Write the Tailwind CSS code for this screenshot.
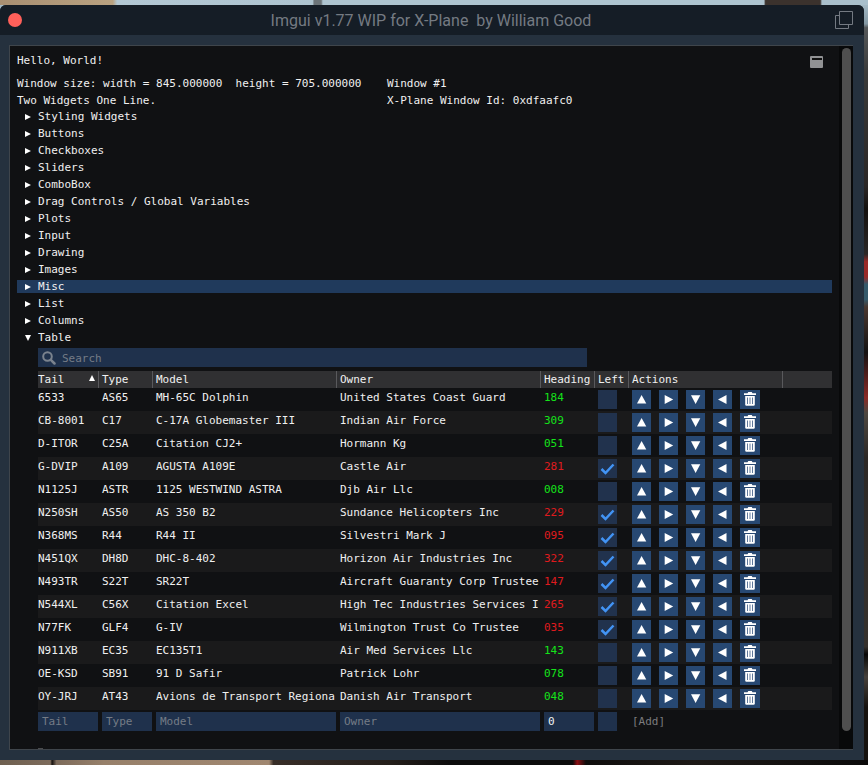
<!DOCTYPE html>
<html lang="en">
<head>
<meta charset="utf-8">
<meta name="viewport" content="width=device-width, initial-scale=1">
<title>Imgui v1.77 WIP for X-Plane</title>
<script src="https://cdn.jsdelivr.net/npm/@tailwindcss/browser@4"></script>
</head>
<body class="min-h-screen flex flex-col bg-[#1d1c1c] font-['DejaVu_Sans_Mono','Liberation_Mono',monospace] text-[11px] text-[#f0f0f0]">
<svg class="absolute w-0 h-0" aria-hidden="true">
  <symbol id="up" viewBox="0 0 19 19"><path d="M9.600 5L14.300 13.600H5z" fill="#fff"/></symbol>
  <symbol id="right" viewBox="0 0 19 19"><path d="M14.200 9.500L5.700 14V5z" fill="#fff"/></symbol>
  <symbol id="down" viewBox="0 0 19 19"><path d="M9.600 14L14.300 5.200H5z" fill="#fff"/></symbol>
  <symbol id="left" viewBox="0 0 19 19"><path d="M5 9.500L13.500 5v9z" fill="#fff"/></symbol>
  <symbol id="trash" viewBox="0 0 20 19"><path d="M4 3.200h3.500l.8-1.200h3.400l.8 1.200H16v1.700H4z" fill="#fff"/><path d="M5.200 6h9.600v8.600q0 1.200-1.200 1.200H6.400q-1.200 0-1.200-1.200z" fill="#fff"/><path d="M7.500 7.500v6.500M10 7.500v6.500M12.500 7.500v6.500" stroke="#5f789b" stroke-width="1"/></symbol>
  <symbol id="tri" viewBox="0 0 6 6"><path d="M0 0L6 3L0 6z" fill="#fff"/></symbol>
</svg>
<div class="h-[5px] bg-[linear-gradient(to_right,#a88f72_0%,#b9a281_13%,#b3c8d4_13.5%,#aec4d0_36%,#6c7478_36.2%,#6c7478_37%,#aec4d0_37.2%,#aec4d0_88%,#3b322d_88.200%,#3b322d_94.500%,#a9bfcb_94.700%)]"></div>
<div class="flex-1 flex bg-[linear-gradient(to_bottom,#a3b8c4_0%,#8397a2_2.500%,#55585a_3%,#3a3a3a_9%,#2a2726_24%,#14110f_27%,#2a2726_33%,#992a28_34%,#992a28_36%,#35596a_37%,#35596a_39%,#4a3830_40%,#141212_46%,#8a2a26_52%,#4d4740_54%,#2c2826_60%,#35312d_85%,#080808_86%,#45403b_89%,#16120f_93%)]">
  <main class="flex-1 min-w-0 mr-1 flex flex-col bg-[#25313e] rounded-t-md">
    <header class="h-[30px] bg-[#151d26] rounded-t-md flex items-center pl-2 pr-2.5">
      <button aria-label="Close" class="w-[14px] h-[14px] rounded-full bg-[#ff605a]"></button>
      <h1 class="flex-1 text-center font-[Roboto,sans-serif] text-[16px] leading-[30px] text-[#747a82] whitespace-pre pt-0.5 pl-1.5">Imgui v1.77 WIP for X-Plane  by William Good</h1>
      <button aria-label="Pop out"><svg width="20" height="20" viewBox="0 0 20 20" fill="none" stroke="#747a82"><path d="M5.500 5.500h-4v13h13v-4"/><path d="M5.500 1.500h13v13h-13z"/></svg></button>
    </header>
    <div class="flex-1 mt-[10px] ml-[9px] mr-[11px] mb-[10px] border border-[#3f454b] border-r-0 bg-[#101113] flex">
      <div class="flex-1 min-w-0 pl-[7px] pr-[7px] pt-1.5">
        <div class="flex justify-between leading-[17px]">
          <p>Hello, World!</p>
          <button aria-label="Collapse" class="mr-2"><svg width="14" height="14" viewBox="0 0 14 14"><rect x="0" y="2" width="13" height="12" rx="1" fill="#919294"/><path d="M2 4h10v2H2z" fill="#111"/></svg></button>
        </div>
        <div class="mt-1.5 grid grid-cols-[370px_1fr] leading-[17px] whitespace-pre">
          <p>Window size: width = 845.000000  height = 705.000000</p><p>Window #1</p>
          <p>Two Widgets One Line.</p><p>X-Plane Window Id: 0xdfaafc0</p>
        </div>
        <nav id="tree" class="mt-px flex flex-col gap-1"></nav>
        <section class="pl-[21px] pt-1">
          <label class="flex items-center h-[19px] w-[549px] max-w-full bg-[#1f314c] pl-1 gap-1.5">
            <svg width="14" height="14" viewBox="0 0 14 14" fill="none" stroke="#7b838e"><circle cx="5.500" cy="5.500" r="4.300" stroke-width="2"/><path d="M8.800 8.800l3.700 3.700" stroke-width="2.500" stroke-linecap="round"/></svg>
            <input type="text" aria-label="Search" placeholder="Search" class="flex-1 min-w-0 h-[19px] pt-px outline-none placeholder:text-[#757c86]">
          </label>
          <table class="mt-1 w-full table-fixed border-collapse text-left">
            <colgroup><col class="w-[60px]"><col class="w-[54px]"><col class="w-[184px]"><col class="w-[204px]"><col class="w-[54px]"><col class="w-[34px]"><col class="w-[154px]"><col></colgroup>
            <thead><tr id="head" class="h-[17px] bg-[#303032] leading-[17px]"></tr></thead>
            <tbody id="rows"></tbody>
            <tfoot><tr>
              <td class="p-0 pt-0.5"><input type="text" aria-label="Tail" placeholder="Tail" class="block w-full h-[19px] bg-[#1f314c] px-1 placeholder:text-[#757c86]"></td>
              <td class="p-0 pl-1 pt-0.5"><input type="text" aria-label="Type" placeholder="Type" class="block w-full h-[19px] bg-[#1f314c] px-1 placeholder:text-[#757c86]"></td>
              <td class="p-0 pl-1 pt-0.5"><input type="text" aria-label="Model" placeholder="Model" class="block w-full h-[19px] bg-[#1f314c] px-1 placeholder:text-[#757c86]"></td>
              <td class="p-0 pl-1 pt-0.5"><input type="text" aria-label="Owner" placeholder="Owner" class="block w-full h-[19px] bg-[#1f314c] px-1 placeholder:text-[#757c86]"></td>
              <td class="p-0 pl-1 pt-0.5"><input type="text" aria-label="Heading" value="0" class="block w-full h-[19px] bg-[#1f314c] px-1"></td>
              <td class="p-0 pl-1 pt-0.5"><input type="checkbox" aria-label="Left" class="appearance-none block size-[19px] bg-[#1f314c]"></td>
              <td class="p-0 pl-1 pt-0.5"><button class="block h-[19px] pt-px text-[#7c7c7e]">[Add]</button></td>
              <td></td>
            </tr></tfoot>
          </table>
          <div class="mt-[17px] h-px w-[5px] bg-[#4a4b4d]"></div>
        </section>
      </div>
      <div class="w-[14px] bg-[#08090a] pt-0.5 pb-[18px] pl-[3px] flex">
        <div class="w-[9px] rounded-full bg-[#4f4f4f]"></div>
      </div>
    </div>
  </main>
</div>
<div class="h-[5px] bg-[linear-gradient(to_right,#6f6050_0%,#7d6b5b_5.800%,#15110f_6%,#7d6b5b_6.500%,#97806a_12%,#a08770_31%,#382e28_31.500%,#241e1a_45%,#0c0c0c_52%,#0c0c0c_66%,#8c1014_66.500%,#0f0d0c_67.500%,#1d1916_80%,#0b0a0a_100%)]"></div>
<script>
const nodes = ['Styling Widgets','Buttons','Checkboxes','Sliders','ComboBox','Drag Controls / Global Variables','Plots','Input','Drawing','Images','Misc','List','Columns','Table'];
document.getElementById('tree').innerHTML = nodes.map(n =>
  `<button class="flex items-center w-full h-[13px] pl-2 gap-[7px] leading-[13px] ${n === 'Misc' ? 'bg-[#203a5c]' : ''}" aria-expanded="${n === 'Table'}"><svg width="6" height="6" class="${n === 'Table' ? 'rotate-90' : ''}"><use href="#tri"/></svg>${n}</button>`).join('');
const heads = ['Tail','Type','Model','Owner','Heading','Left','Actions',''];
document.getElementById('head').innerHTML = heads.map((h, i) =>
  i === 0 ? `<th class="p-0 font-normal"><span class="flex justify-between pr-[3px]">Tail<svg width="6" height="6" class="-rotate-90 mt-1"><use href="#tri"/></svg></span></th>`
          : `<th class="p-0 font-normal"><span class="block h-[17px] border-l border-[#59595c] pl-[3px]">${h}</span></th>`).join('');
const data = [
 ['6533','AS65','MH-65C Dolphin','United States Coast Guard','184',0],
 ['CB-8001','C17','C-17A Globemaster III','Indian Air Force','309',0],
 ['D-ITOR','C25A','Citation CJ2+','Hormann Kg','051',0],
 ['G-DVIP','A109','AGUSTA A109E','Castle Air','281',1],
 ['N1125J','ASTR','1125 WESTWIND ASTRA','Djb Air Llc','008',0],
 ['N250SH','AS50','AS 350 B2','Sundance Helicopters Inc','229',1],
 ['N368MS','R44','R44 II','Silvestri Mark J','095',1],
 ['N451QX','DH8D','DHC-8-402','Horizon Air Industries Inc','322',1],
 ['N493TR','S22T','SR22T','Aircraft Guaranty Corp Trustee','147',1],
 ['N544XL','C56X','Citation Excel','High Tec Industries Services I','265',1],
 ['N77FK','GLF4','G-IV','Wilmington Trust Co Trustee','035',1],
 ['N911XB','EC35','EC135T1','Air Med Services Llc','143',0],
 ['OE-KSD','SB91','91 D Safir','Patrick Lohr','078',0],
 ['OY-JRJ','AT43','Avions de Transport Regiona','Danish Air Transport','048',0]];
document.getElementById('rows').innerHTML = data.map(r => `<tr class="h-[23px] align-top leading-[19px] even:bg-[#1a1a1b]">
${r.slice(0, 4).map((c, i) => `<td class="p-0 whitespace-nowrap overflow-hidden ${i ? 'pl-1' : ''}">${c}</td>`).join('')}
<td class="p-0 pl-1 ${r[5] ? 'text-[#e01a1e]' : 'text-[#14e31a]'}">${r[4]}</td>
<td class="p-0 pl-1 pt-0.5"><label class="grid size-[19px]"><input type="checkbox" aria-label="Left ${r[0]}" ${r[5] ? 'checked' : ''} class="peer appearance-none size-[19px] bg-[#21324d] [grid-area:1/1]"><svg class="hidden peer-checked:block [grid-area:1/1] pointer-events-none" width="19" height="19" fill="none" stroke="#4294f5" stroke-width="2.500"><path d="M3.500 10l4 4L15.500 5.500"/></svg></label></td>
<td class="p-0 pl-1 pt-0.5"><div class="flex gap-2">${['up','right','down','left'].map(a => `<button aria-label="${a}" class="bg-[#274872]"><svg width="19" height="19" class="block"><use href="#${a}"/></svg></button>`).join('')}<button aria-label="Delete" class="bg-[#274872]"><svg width="20" height="19" class="block"><use href="#trash"/></svg></button></div></td><td></td></tr>`).join('');
</script>
</body>
</html>
